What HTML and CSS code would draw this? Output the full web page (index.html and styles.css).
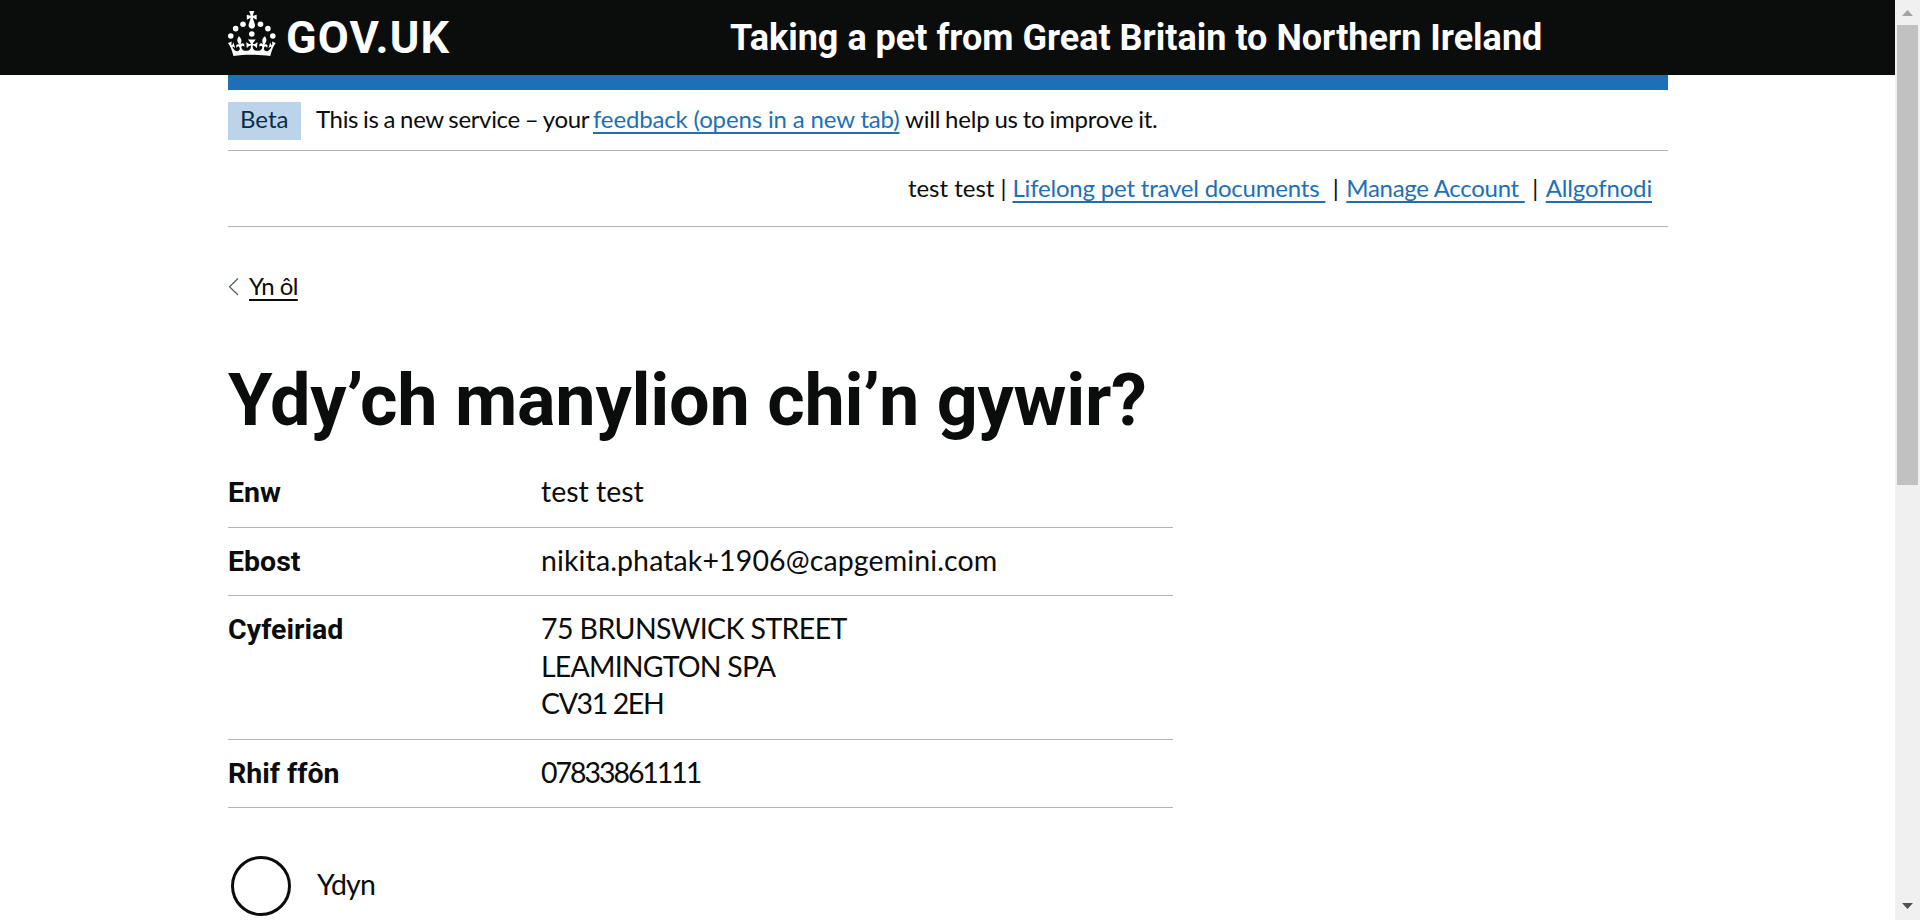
FILE: index.html
```html
<!DOCTYPE html>
<html lang="cy">
<head>
<meta charset="utf-8">
<title>Ydy’ch manylion chi’n gywir?</title>
<link rel="stylesheet" href="styles.css">
</head>
<body>
<div class="page">
  <header class="header">
    <div class="container header-inner">
      <a class="logo">
        <svg class="crown" viewBox="0 0 64 60" width="48" height="45" fill="currentColor" aria-hidden="true">
          <circle cx="20" cy="17.6" r="3.7"/><circle cx="10.2" cy="23.5" r="3.7"/><circle cx="3.7" cy="33.2" r="3.7"/><circle cx="31.7" cy="30.6" r="3.7"/><circle cx="43.3" cy="17.6" r="3.7"/><circle cx="53.2" cy="23.5" r="3.7"/><circle cx="59.7" cy="33.2" r="3.7"/>
          <path d="M33.1,9.8c.2-.1.3-.3.5-.5l4.6,2.4v-6.8l-4.6,1.5c-.1-.2-.3-.3-.5-.5l1.9-5.9h-6.7l1.9,5.9c-.2.1-.3.3-.5.5l-4.6-1.5v6.8l4.6-2.4c.1.2.3.3.5.5l-2.6,8c-.9,2.8,1.2,5.7,4.1,5.7h0c3,0,5.1-2.9,4.1-5.7l-2.6-8ZM37,37.9s-3.4,3.8-4.1,6.1c2.2,0,4.2-.5,6.4-2.8l-.7,8.5c-2-2.8-4.4-4.1-5.7-3.8.1,3.1.5,6.7,5.8,7.2,3.7.3,6.7-1.5,7-3.8.4-2.6-2-4.3-3.7-1.6-1.4-4.5,2.4-6.1,4.9-3.2-1.9-4.5-1.8-7.7,2.4-10.9,3,4,2.6,7.3-1.2,11.1,2.4-1.3,6.2,0,4,4.6-1.2-2.8-3.7-2.2-4.2.2-.3,1.7.7,3.7,3,4.2,1.9.3,4.7-.9,7-5.9-1.3,0-2.4.7-3.9,1.7l2.4-8c.6,2.3,1.4,3.7,2.2,4.5.6-1.6.5-2.8,0-5.3l5,1.8c-2.6,3.6-5.2,8.7-7.3,17.5-7.4-1.1-15.7-1.7-24.5-1.7h0c-8.8,0-17.1.6-24.5,1.7-2.1-8.9-4.7-13.9-7.3-17.5l5-1.8c-.5,2.5-.6,3.7,0,5.3.8-.8,1.6-2.3,2.2-4.5l2.4,8c-1.5-1-2.6-1.7-3.9-1.7,2.3,5,5.2,6.2,7,5.9,2.3-.4,3.3-2.4,3-4.2-.5-2.4-3-3.1-4.2-.2-2.2-4.6,1.6-6,4-4.6-3.7-3.7-4.2-7.1-1.2-11.1,4.2,3.2,4.3,6.4,2.4,10.9,2.5-2.8,6.3-1.3,4.9,3.2-1.8-2.7-4.1-1-3.7,1.6.3,2.3,3.3,4.1,7,3.8,5.4-.5,5.7-4.2,5.8-7.2-1.3-.2-3.7,1-5.7,3.8l-.7-8.5c2.2,2.3,4.2,2.7,6.4,2.8-.7-2.3-4.1-6.1-4.1-6.1h10.6Z"/>
        </svg>
        <span class="logo-text">GOV.UK</span>
      </a>
      <div class="service-name">Taking a pet from Great Britain to Northern Ireland</div>
    </div>
  </header>

  <div class="container">
    <div class="blue-bar"></div>
    <div class="phase-banner">
      <strong class="tag">Beta</strong>
      <div class="phase-text"><span class="intro">This is a new service – your</span><a class="link feedback">feedback (opens in a new tab)</a><span class="outro">will help us to improve it.</span></div>
    </div>

    <nav class="account">
      <span>test test</span><span class="sep first">|</span><a class="link doc-link">Lifelong pet travel documents&nbsp;</a><span class="sep">|</span><a class="link manage-link">Manage Account&nbsp;</a><span class="sep">|</span><a class="link signout-link">Allgofnodi</a>
    </nav>

    <a class="back-link"><svg class="chevron" width="11" height="18" viewBox="0 0 11 18" fill="none" stroke="#505a5f" stroke-width="1.2"><path d="M10 .5 1.5 8.7 10 17"/></svg><span class="back-text">Yn ôl</span></a>

    <h1 class="heading">Ydy’ch manylion chi’n gywir?</h1>

    <dl class="summary">
      <div class="row"><dt>Enw</dt><dd>test test</dd></div>
      <div class="row"><dt>Ebost</dt><dd class="email">nikita.phatak+1906@capgemini.com</dd></div>
      <div class="row"><dt>Cyfeiriad</dt><dd><span class="street">75 BRUNSWICK STREET</span><br><span class="town">LEAMINGTON SPA</span><br><span class="postcode">CV31 2EH</span></dd></div>
      <div class="row"><dt>Rhif ffôn</dt><dd class="phone">07833861111</dd></div>
    </dl>

    <label class="radio"><span class="radio-circle"></span><span class="radio-label">Ydyn</span></label>
  </div>
</div>
<div class="scrollbar">
  <svg class="arrow-up" width="11" height="6" viewBox="0 0 11 6"><path fill="#a3a3a3" d="M0 6 5.5 0 11 6Z"/></svg>
  <div class="thumb"></div>
  <svg class="arrow-down" width="11" height="6" viewBox="0 0 11 6"><path fill="#505050" d="M0 0 5.5 6 11 0Z"/></svg>
</div>
</body>
</html>
```
FILE: styles.css
```css
* { box-sizing: border-box; }

body {
  margin: 0;
  height: 920px;
  overflow: hidden;
  display: flex;
  background: #fff;
  color: #0b0c0c;
  font-family: Lato, "Noto Sans", sans-serif;
  font-size: 24px;
  line-height: 30px;
}

.page { flex: 1; min-width: 0; overflow: hidden; }

.container { width: 1440px; margin: 0 0 0 228px; }

.header { height: 75px; background: #0b0c0c; color: #fff; }

.header-inner { display: flex; align-items: flex-start; }

.logo { display: flex; width: 502px; color: #fff; }

.crown { margin-top: 11px; }

.logo-text,
.service-name,
.heading,
.row dt {
  font-family: Roboto, "Noto Sans", sans-serif;
  font-weight: 700;
}

.logo-text {
  margin: 11px 0 0 10px;
  font-size: 45px;
  line-height: 54px;
  letter-spacing: 1.2px;
}

.service-name {
  margin-top: 16px;
  font-size: 36px;
  line-height: 45px;
}

.blue-bar { height: 15px; background: #1d70b8; }

.phase-banner {
  display: flex;
  align-items: flex-start;
  height: 61px;
  padding-top: 12px;
  border-bottom: 1px solid #b1b4b6;
}

.tag {
  width: 73px;
  height: 38px;
  padding: 2px 0 0 12px;
  background: #bbd4ea;
  color: #0c2d4a;
  font-weight: 400;
}

.phase-text { display: flex; padding: 2px 0 0 15px; white-space: nowrap; }
.intro { width: 277px; letter-spacing: -0.35px; word-spacing: -0.8px; }
.feedback { width: 312px; letter-spacing: -0.15px; }
.outro { letter-spacing: -0.2px; word-spacing: -1px; }

.link {
  color: #1d70b8;
  text-decoration: underline;
  text-decoration-thickness: 2px;
  text-underline-offset: 4px;
}

.account {
  display: flex;
  justify-content: flex-end;
  height: 76px;
  padding: 22px 16px 0 0;
  border-bottom: 1px solid #b1b4b6;
  white-space: nowrap;
}

.account .link { text-decoration-skip-ink: none; }
.sep { width: 21px; text-align: center; }
.sep.first { width: 18px; }
.doc-link { letter-spacing: -0.2px; }
.manage-link { letter-spacing: -0.3px; }
.signout-link { letter-spacing: -0.15px; }

.back-link { display: flex; margin-top: 44px; height: 30px; }
.chevron { margin-top: 7px; }
.back-text {
  margin-left: 10px;
  letter-spacing: -0.6px;
  text-decoration: underline;
  text-decoration-thickness: 2px;
  text-underline-offset: 4px;
}

.heading {
  margin: 62px 0 21.5px;
  font-size: 72px;
  line-height: 75px;
  letter-spacing: -0.25px;
}

.summary {
  width: 945px;
  margin: 0;
  font-size: 28.5px;
  line-height: 37.5px;
}

.row {
  display: flex;
  align-items: flex-start;
  padding: 13.7px 0 16.3px;
  border-bottom: 1px solid #b1b4b6;
}

.row dt { width: 313px; height: 36px; line-height: 39.5px; }
.row dd { margin: 0; }
.email { letter-spacing: 0.12px; }
.street { letter-spacing: -0.6px; }
.town { letter-spacing: -0.8px; }
.postcode { letter-spacing: -1.4px; }
.row .phone { letter-spacing: -2.05px; }

.radio { display: flex; margin: 47.5px 0 0 3px; }

.radio-circle {
  width: 60px;
  height: 60px;
  border: 3px solid #0b0c0c;
  border-radius: 50%;
}

.radio-label {
  padding-left: 26px;
  font-size: 28.5px;
  line-height: 56px;
  letter-spacing: -0.8px;
}

.scrollbar {
  display: flex;
  flex-direction: column;
  align-items: center;
  width: 25px;
  height: 920px;
  padding: 10px 0 11px;
  background: #f0f0f0;
}

.thumb { width: 21px; height: 460px; margin-top: 9px; background: #c1c1c1; }
.arrow-down { margin-top: auto; }
```
